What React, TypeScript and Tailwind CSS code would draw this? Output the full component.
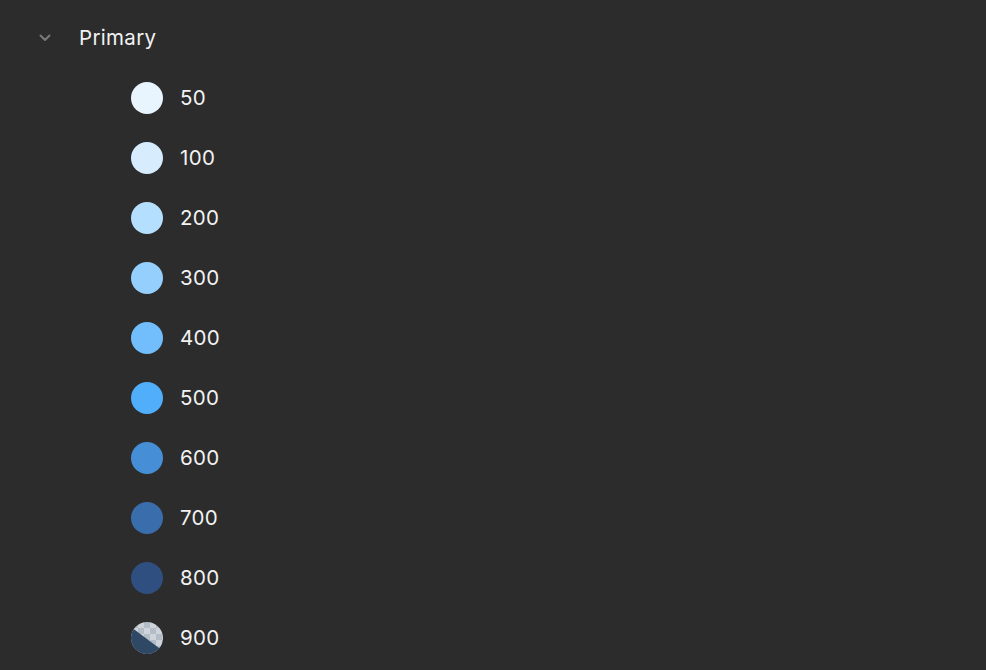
const shades = [
  { n: "50", c: "bg-[#e8f5ff]" },
  { n: "100", c: "bg-[#d7edfe]" },
  { n: "200", c: "bg-[#b5dffe]" },
  { n: "300", c: "bg-[#94cffd]" },
  { n: "400", c: "bg-[#72befc]" },
  { n: "500", c: "bg-[#51aefb]" },
  { n: "600", c: "bg-[#468fd6]" },
  { n: "700", c: "bg-[#3a6dac]" },
  { n: "800", c: "bg-[#2e4f80]" },
];

function CheckerSwatch() {
  return (
    <svg width="32" height="32" viewBox="0 0 32 32" className="shrink-0">
      <defs>
        <pattern id="chk" x="1" y="0" width="12" height="12" patternUnits="userSpaceOnUse">
          <rect width="12" height="12" fill="#cdd4db" />
          <rect width="6" height="6" fill="#b4bdc6" />
          <rect x="6" y="6" width="6" height="6" fill="#b4bdc6" />
        </pattern>
        <clipPath id="circ">
          <circle cx="16" cy="16" r="16" />
        </clipPath>
      </defs>
      <g clipPath="url(#circ)">
        <rect width="32" height="32" fill="url(#chk)" />
        <polygon points="0,5 32,29 32,32 0,32" fill="#2f4866" />
      </g>
    </svg>
  );
}

function Chevron() {
  return (
    <svg width="12" height="8" viewBox="0 0 12 8" className="shrink-0">
      <path d="M1.5 1.5 L6 6 L10.5 1.5" fill="none" stroke="#7a7a7a" strokeWidth="2" strokeLinecap="round" strokeLinejoin="round" />
    </svg>
  );
}

export default function App() {
  return (
    <div
      className="w-[986px] h-[670px] bg-[#2c2c2c] text-[#f2f2f2] pt-2 tracking-[0.02em]"
      style={{ fontFamily: "Inter, 'Noto Sans', sans-serif" }}
    >
      <div className="flex items-center h-[60px]">
        <div className="w-[79px] flex pl-[39px]">
          <Chevron />
        </div>
        <span className="text-[20.5px]">Primary</span>
      </div>
      {shades.map((s) => (
        <div key={s.n} className="flex items-center h-[60px] pl-[131px] gap-[17px]">
          <div className={`w-8 h-8 rounded-full ${s.c}`} />
          <span className="text-[20.5px]">{s.n}</span>
        </div>
      ))}
      <div className="flex items-center h-[60px] pl-[131px] gap-[17px]">
        <CheckerSwatch />
        <span className="text-[20.5px]">900</span>
      </div>
    </div>
  );
}
